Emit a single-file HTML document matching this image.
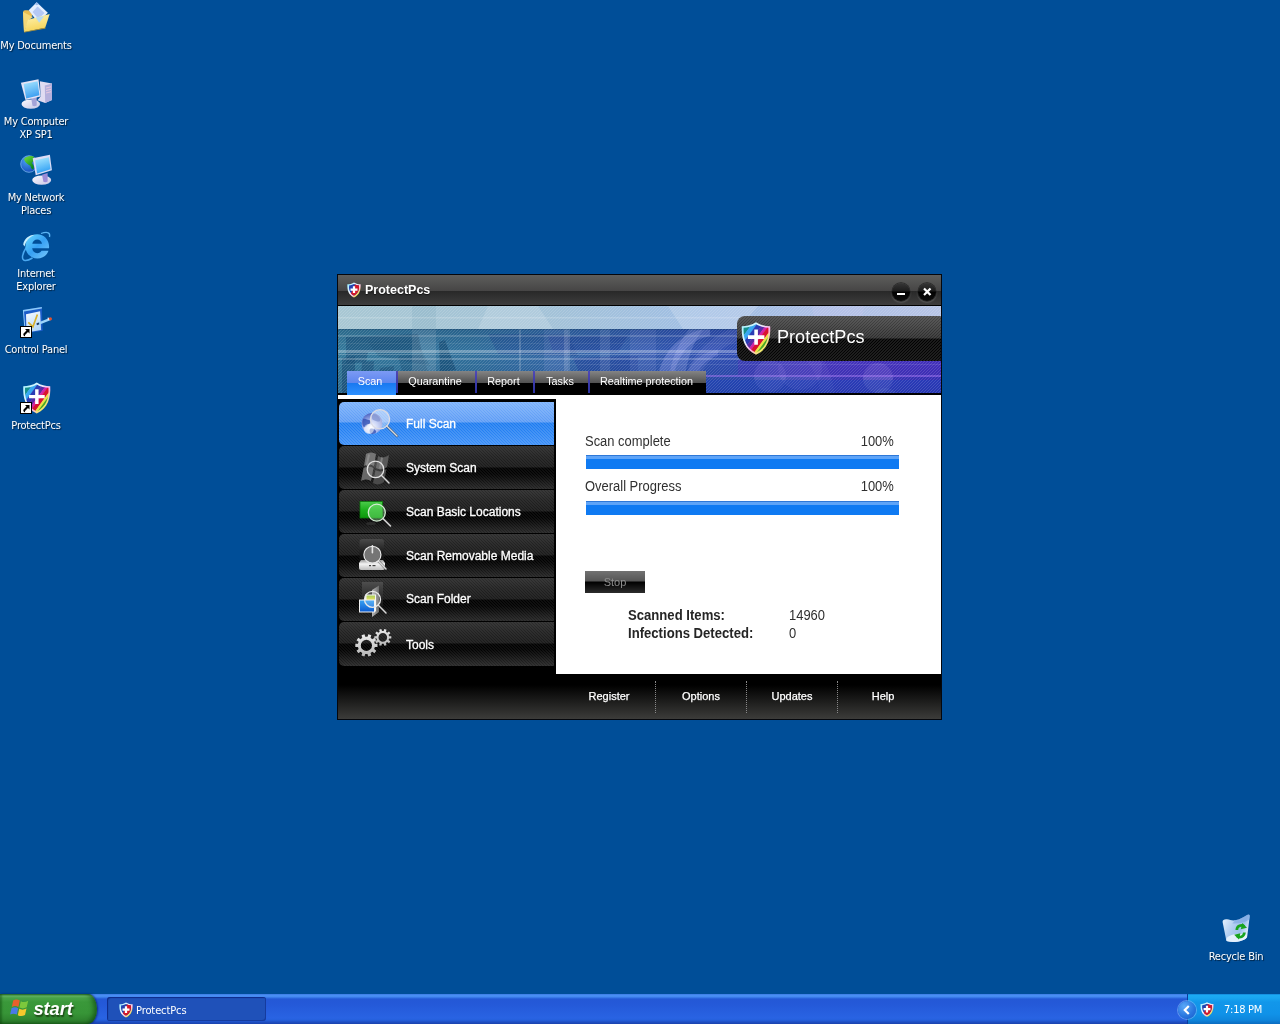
<!DOCTYPE html>
<html>
<head>
<meta charset="utf-8">
<title>ProtectPcs</title>
<style>
*{box-sizing:border-box;margin:0;padding:0}
html,body{width:1280px;height:1024px;overflow:hidden}
body{background:#004e98;font-family:"Liberation Sans",sans-serif;position:relative;will-change:transform}
.abs{position:absolute}
/* desktop icons */
.dicon{position:absolute;width:90px;text-align:center;color:#fff;font-family:"DejaVu Sans Condensed","DejaVu Sans","Liberation Sans",sans-serif;font-size:11px;line-height:13px;letter-spacing:-.22px}
.dicon svg{display:block;margin:0 auto}
.dicon .dl{margin-top:5px;text-shadow:1px 1px 1px rgba(0,0,0,.6);white-space:nowrap}
/* taskbar */
#taskbar{position:absolute;left:0;top:994px;width:1280px;height:30px;background:linear-gradient(#3572dc 0,#4a90f4 1px,#4489f0 3px,#2c69e0 4px,#2458d6 5.500px,#2459d8 10px,#2963e3 24px,#2560dc 26px,#1e4fc4 28px,#1a42ac 30px)}
#start{position:absolute;left:0;top:0;width:97px;height:30px;border-radius:0 9px 9px 0/0 15px 15px 0;background:linear-gradient(#2e7a2e 0,#66b866 2px,#48a448 4px,#3a983a 8px,#379537 19px,#2f842f 26px,#256c25 30px);box-shadow:inset -4px 0 5px -1px rgba(0,50,0,.55),inset 2px 0 2px rgba(0,50,0,.35),1px 0 2px rgba(0,10,80,.6)}
#start span{position:absolute;left:33.500px;top:4px;color:#fff;font:italic bold 18.5px/22px "Liberation Sans",sans-serif;text-shadow:1px 1.500px 1.500px rgba(20,50,10,.8);letter-spacing:-.2px}
#task{position:absolute;left:107px;top:3px;width:159px;height:24px;border-radius:3px;background:#1f51b9;box-shadow:inset 1px 1px 1px rgba(8,30,120,.75),inset -1px -1px 0 rgba(15,45,140,.6);color:#fff;font:11px/24px "DejaVu Sans Condensed","DejaVu Sans",sans-serif;letter-spacing:-.1px}
#task span{position:absolute;left:29px;top:2px}
#tray{position:absolute;left:1187px;top:0;width:93px;height:30px;background:linear-gradient(#0f78d0 0,#1cacf4 1px,#19a6f2 4px,#1297ea 8px,#1092e8 20px,#0e86dc 26px,#0b6cc0 30px);border-left:1px solid #0c3c9c;color:#fff;font:11px/30px "DejaVu Sans Condensed","DejaVu Sans",sans-serif;letter-spacing:-.25px}
#chev{position:absolute;left:1178px;top:7px;width:18px;height:18px;border-radius:9px;background:radial-gradient(circle at 35% 30%,#5aa8f8 0,#2a78e0 55%,#1858c8 100%);box-shadow:0 0 0 1px rgba(140,190,250,.55)}
/* window */
#win{position:absolute;left:337px;top:274px;width:605px;height:446px;background:#000;border:1px solid #05070c;overflow:hidden}
#title{position:absolute;left:0;top:0;width:603px;height:30px;background:linear-gradient(#5e5e5c 0,#464545 16px,#282828 16px,#3e3d3d 30px)}
#title .t{position:absolute;left:27px;top:7px;color:#fff;font:bold 12.5px/16px "Liberation Sans",sans-serif;text-shadow:0 1px 1px rgba(0,0,0,.6)}
.cb{position:absolute;top:8px;width:18px;height:18px;border-radius:9px;background:linear-gradient(#363636 0,#1c1c1c 8px,#020202 9px,#0e0e0e 18px);box-shadow:0 0 0 .7px rgba(10,10,10,.6),0 1.500px 1.500px .6px rgba(120,120,120,.45)}
#banner{position:absolute;left:0;top:31px;width:603px;height:87px;overflow:hidden}
#logo{position:absolute;left:399px;top:10px;width:210px;height:45px;border-radius:8px;background:repeating-linear-gradient(135deg,rgba(255,255,255,.10) 0,rgba(255,255,255,.10) 1px,rgba(255,255,255,0) 1px,rgba(255,255,255,0) 2.12px),linear-gradient(#484848 0,#2c2c2c 22px,#000 23px,#060606 45px)}
#logo span{position:absolute;left:40px;top:10px;color:#fff;font:18.1px/22px "Liberation Sans",sans-serif}
#tabs{position:absolute;left:0;top:96px;width:603px;height:24px}
.tab{position:absolute;top:0;height:24px;color:#fff;font:10.8px/20px "Liberation Sans",sans-serif;text-align:center;padding-right:3px;background:linear-gradient(#848484 0,#505050 12px,#000 12px,#000 24px)}
.tab.sel{background:linear-gradient(#7c9af4 0,#5c86ee 12px,#1878f0 12px,#2c90ff 24px)}
.tsep{position:absolute;top:0;width:2px;height:22px;background:linear-gradient(#5048b4,#2a30a0)}
#side{position:absolute;left:0;top:124px;width:218px;height:275px;background:#000}
.mi{position:absolute;left:1px;width:215px;height:43px;border-radius:5px 0 0 5px;color:#fff;font:12px/43px "Liberation Sans",sans-serif;background:repeating-linear-gradient(45deg,rgba(255,255,255,.055) 0,rgba(255,255,255,.055) 1px,rgba(255,255,255,0) 1px,rgba(255,255,255,0) 2.12px),linear-gradient(#2e2e2e 0,#222 10px,#1a1a1a 21px,#000 22px,#020202 28px,#262626 43px)}
.mi.sel{background:repeating-linear-gradient(45deg,rgba(255,255,255,.13) 0,rgba(255,255,255,.13) 1px,rgba(255,255,255,0) 1px,rgba(255,255,255,0) 2.12px),linear-gradient(#78b0fa 0,#5a9af5 20px,#1a7af0 21px,#3a8ef8 43px)}
.mi span{position:absolute;left:67px;top:0;-webkit-text-stroke:.3px #fff}
.mi svg{position:absolute}
#content{position:absolute;left:0;top:120px;width:603px;height:279px;background:#fff}
#content .lbl{position:absolute;margin-left:219px;color:#303030;font:14px/16px "Liberation Sans",sans-serif;white-space:nowrap;transform:scaleX(.925);transform-origin:0 0}
#content .lbl.r{transform-origin:100% 0}
#content .lbl.b{font-weight:bold;color:#262626;transform:scaleX(.937)}
#bottom{position:absolute;left:0;top:399px;width:603px;height:45px;background:linear-gradient(#000 0,#000 11px,#3c3c3a 45px)}
.bl{position:absolute;top:0;height:45px;line-height:45px;color:#fff;font-size:11px;text-align:center;-webkit-text-stroke:.25px #fff}
.sep{position:absolute;top:7px;height:32px;width:0;border-left:1px dotted #888}
.pb{position:absolute;left:248px;width:313px;height:14px;background:linear-gradient(#2e78d8 0,#2e78d8 1px,#5ea4f8 1px,#5ea4f8 4px,#0f7af2 4px)}
#stop{position:absolute;left:247px;top:176px;width:60px;height:22px;background:linear-gradient(#727272 0,#565656 10px,#000 11px,#2c2c2c 22px);color:#8e8e8e;font:11px/22px "Liberation Sans",sans-serif;text-align:center}
</style>
</head>
<body>

<!-- DESKTOP ICONS -->
<div class="dicon" style="left:-9px;top:2px"><svg width="32" height="32" viewBox="0 0 32 32"><defs><linearGradient id="dg1" x1="0" y1="0" x2=".3" y2="1"><stop offset="0" stop-color="#fff6b8"/><stop offset="1" stop-color="#f6d458"/></linearGradient></defs><path d="M3 10.500Q3 8.300 5 8.300H8.500L13 12.500L8 18L4 30Z" fill="#e8bc50"/><path d="M3 10L4 30L9 18L13 15Z" fill="#f4d878"/><path d="M16.700 0.200L27.800 10.700L18 20.500L8.700 8.300Z" fill="#e4eeff"/><path d="M17.500 4.500L24.500 11L18.500 17L12.500 10Z" fill="#b4c8f4"/><path d="M16.700 0.200L19 2.400L16.500 3.200L14.800 2Z" fill="#9abcf0"/><path d="M8 17.700L29.700 12L25.200 25.800L4 30Z" fill="url(#dg1)"/><path d="M15.700 15.600L24.100 14.200L19.200 20.800Z" fill="#b4daf6"/><path d="M4 30L25.200 25.800L25.600 26.500L4.300 30.600Z" fill="#c09828"/></svg><div class="dl">My Documents</div></div>
<div class="dicon" style="left:-9px;top:78px"><svg width="32" height="32" viewBox="0 0 32 32"><defs><linearGradient id="cs2" x1=".2" y1="0" x2=".5" y2="1"><stop offset="0" stop-color="#a4e4ff"/><stop offset="1" stop-color="#389cf0"/></linearGradient><linearGradient id="cb2" x1="0" y1="0" x2="1" y2="1"><stop offset="0" stop-color="#fafaff"/><stop offset="1" stop-color="#c4c4e4"/></linearGradient></defs><path d="M19.900 3.300L32 5.400V21.900L25.200 25.100L17.400 22.300L20.600 18.400Z" fill="#e0dcf2"/><path d="M24.800 7.500L32 5.600V21.900L25.200 25.100Z" fill="#b4b0dc"/><path d="M26 10L31 8.800M26 12.500L31 11.300M26 15L31 13.800" stroke="#e8c8e0" stroke-width="1"/><ellipse cx="10.800" cy="26.100" rx="9.300" ry="4.700" fill="url(#cb2)"/><path d="M11.100 19.800L16.700 18.700V27.500Q14.500 28.800 12.500 27.800Z" fill="#a4a4d8"/><path d="M0.900 4.700L18.500 1.200L20.600 18.400L5.500 21.900Z" fill="#e4e4f6"/><path d="M3.600 5.900L17.600 3.300L19.400 17.200L6.200 20.500Z" fill="url(#cs2)"/></svg><div class="dl">My Computer<br>XP SP1</div></div>
<div class="dicon" style="left:-9px;top:154px"><svg width="32" height="32" viewBox="0 0 32 32"><defs><radialGradient id="ng3" cx=".35" cy=".3" r=".9"><stop offset="0" stop-color="#4aa0f0"/><stop offset="1" stop-color="#0a3cb0"/></radialGradient><linearGradient id="nl3" x1="0" y1="0" x2=".6" y2="1"><stop offset="0" stop-color="#7ae040"/><stop offset="1" stop-color="#0a8a1a"/></linearGradient><linearGradient id="ns3" x1=".2" y1="0" x2=".5" y2="1"><stop offset="0" stop-color="#a8e8ff"/><stop offset="1" stop-color="#30a0f4"/></linearGradient><linearGradient id="nb3" x1="0" y1="0" x2="1" y2="1"><stop offset="0" stop-color="#fafaff"/><stop offset="1" stop-color="#c8c4e4"/></linearGradient></defs><circle cx="9" cy="10" r="8.300" fill="url(#ng3)" stroke="#7ab4f0" stroke-width=".8"/><path d="M4 5C7 1.500 12 1.500 14 3C15 6 13 7 12 9C13 11 14.500 12 13.500 15C12 16 11 14 10.500 12C8 10 5 9 4 5Z" fill="url(#nl3)"/><ellipse cx="21.700" cy="26.100" rx="9.500" ry="4.700" fill="url(#nb3)"/><path d="M22 20.800L27.600 19.100V27.500Q25.500 28.800 23.400 27.800Z" fill="#9c8cd8"/><path d="M12.700 4.300L29.900 0.800L31.900 16.300L15.700 21.200Z" fill="#dcdcf6"/><path d="M15 6.300L28.900 3.300L30.600 15.200L17.100 19.400Z" fill="url(#ns3)"/></svg><div class="dl">My Network<br>Places</div></div>
<div class="dicon" style="left:-9px;top:230px"><svg width="32" height="32" viewBox="0 0 32 32"><defs><linearGradient id="ie4" x1="0" y1="0" x2="1" y2="1"><stop offset="0" stop-color="#6adcff"/><stop offset=".5" stop-color="#36a0f4"/><stop offset="1" stop-color="#7ac8fa"/></linearGradient></defs><path d="M29.500 7C30.500 3 28 1 21 3.500" fill="none" stroke="#5ab4f4" stroke-width="1.300"/><path d="M6.500 17C2 24 1 30 5 30.500C7 30.700 10 29.500 12.500 28" fill="none" stroke="#4aa8f0" stroke-width="1.500"/><path d="M17.200 4.200C10.500 4.200 5.500 9.700 5.500 16.400C5.500 23.300 10.700 28.500 17.300 28.500C22.500 28.500 26.800 25.600 28.500 20.800H21.500C20.700 22.300 19.200 23.200 17.300 23.200C14.500 23.200 12.500 21.200 12.200 18.300H29C29.100 17.600 29.100 17 29.100 16.400C29.100 9.700 24 4.200 17.200 4.200ZM12.300 13.700C12.800 11.300 14.700 9.500 17.200 9.500C19.700 9.500 21.600 11.300 22 13.700Z" fill="url(#ie4)"/><path d="M3.200 14.500C4 9 9 5 14.500 4.800C9.500 7 6 11 4.500 16.500Z" fill="#c8f0ff"/></svg><div class="dl">Internet<br>Explorer</div></div>
<div class="dicon" style="left:-9px;top:306px"><svg width="32" height="32" viewBox="0 0 32 32"><defs><linearGradient id="cp5" x1="0" y1="0" x2=".4" y2="1"><stop offset="0" stop-color="#fbfcff"/><stop offset="1" stop-color="#b4d8f8"/></linearGradient></defs><path d="M2.900 4L21.800 1L22.700 24.700L4.800 27.500Z" fill="#1c5cc8"/><path d="M2.900 4L21.800 1L21.900 2.600L4 5.600L5.800 27.300L4.800 27.500Z" fill="#8ccaf8"/><path d="M6 8.200L20.100 5.200L21.100 24L6.500 26.500Z" fill="url(#cp5)"/><path d="M8.300 16.300L12.900 20.800L17.400 8.500" fill="none" stroke="#d8b02c" stroke-width="1.700"/><path d="M18 17.800L30.500 12.800" stroke="#9cd4fa" stroke-width="2.400"/><path d="M16.700 18.300L19 17.400" stroke="#203860" stroke-width="1.800"/><circle cx="30.400" cy="12.800" r="1.600" fill="#e2502c"/><path d="M27.800 13L29 12.600" stroke="#f4e8f0" stroke-width="2.400"/><g><rect x="0.500" y="20.500" width="11" height="11" fill="#fff" stroke="#000" stroke-width="1"/><path d="M5 23H9.500V27.500L8 26L5.500 28.500C4.800 29.200 4.800 29.800 5.500 30.300L4.500 30.300C3 29.500 3 28 4 27L6.500 24.500Z" fill="#000"/></g></svg><div class="dl">Control Panel</div></div>
<div class="dicon" style="left:-9px;top:382px"><svg width="32" height="32" viewBox="0 0 32 32"><g transform="translate(2.500 0.200) scale(0.9500 0.9545)"><defs><clipPath id="shi1"><path d="M15 2.300C11.200 4.600 6.500 5.700 2.600 5.800C2.200 16 4.400 25.500 15 30.700C25.600 25.500 27.800 16 27.400 5.800C23.500 5.700 18.800 4.600 15 2.300Z"/></clipPath><clipPath id="sho1"><path d="M15 0.300C11 3 5.500 4.200 0.800 4.200C0.200 16 2.800 27 15 32.700C27.200 27 29.800 16 29.200 4.200C24.500 4.200 19 3 15 0.300Z"/></clipPath><linearGradient id="shr1" x1="0" y1="0" x2="1" y2="1"><stop offset="0" stop-color="#9af0ff"/><stop offset=".35" stop-color="#e8f8ff"/><stop offset=".6" stop-color="#ffb0e8"/><stop offset=".8" stop-color="#f0f060"/><stop offset="1" stop-color="#70e060"/></linearGradient></defs><path d="M15 0.300C11 3 5.500 4.200 0.800 4.200C0.200 16 2.800 27 15 32.700C27.200 27 29.800 16 29.200 4.200C24.500 4.200 19 3 15 0.300Z" fill="url(#shr1)"/><g clip-path="url(#shi1)"><g transform="rotate(-54 15 16)"><rect x="-20" y="-10" width="70" height="14.8" fill="#16908c"/><rect x="-20" y="4.5" width="70" height="4.3" fill="#38a8f2"/><rect x="-20" y="8.5" width="70" height="4.8" fill="#2a3cb4"/><rect x="-20" y="13" width="70" height="3.8" fill="#5a2aa4"/><rect x="-20" y="16.5" width="70" height="2.8" fill="#d422a4"/><rect x="-20" y="19" width="70" height="4.3" fill="#da1230"/><rect x="-20" y="23" width="70" height="2.6" fill="#ece444"/><rect x="-20" y="25.300" width="70" height="6" fill="#48aa22"/><rect x="-20" y="31" width="70" height="19.3" fill="#2a7ad8"/></g></g><path d="M13.300 7.400H16.900V13.300H23.400V16.900H16.900V22.800H13.300V16.900H6.900V13.300H13.300Z" fill="#fff"/></g><g><rect x="0.500" y="20.500" width="11" height="11" fill="#fff" stroke="#000" stroke-width="1"/><path d="M5 23H9.500V27.500L8 26L5.500 28.500C4.800 29.200 4.800 29.800 5.500 30.300L4.500 30.300C3 29.500 3 28 4 27L6.500 24.500Z" fill="#000"/></g></svg><div class="dl">ProtectPcs</div></div>
<div class="dicon" style="left:1191px;top:913px"><svg width="32" height="32" viewBox="0 0 32 32"><defs><linearGradient id="rb7" x1="0" y1="0" x2="1" y2=".5"><stop offset="0" stop-color="#eef7ff"/><stop offset=".45" stop-color="#b4d0f2"/><stop offset=".75" stop-color="#9cc0ec"/><stop offset="1" stop-color="#e0eefc"/></linearGradient></defs><path d="M2.600 9C2.400 6.800 4.500 6 7 6.300C10 6.700 12 7.800 15 7.300C20 6.500 24 4 27 2C28.800 0.900 30 1.500 29.700 3.500L27.200 23.500C27 25 25 26.500 22 27.500C17 29.300 11 29.500 7.500 28.300C6.500 28 6.200 27.200 6 26Z" fill="url(#rb7)"/><path d="M6.300 27.200C6 24 10 21.500 17 20.900C22 20.600 26.500 21.500 27.100 24C26.500 25.500 24.500 26.700 22 27.500C17 29.300 11 29.500 7.500 28.300C6.800 28.100 6.500 27.800 6.300 27.200Z" fill="#e8f3fd" opacity=".92"/><path d="M15 7.300C20 6.500 24 4 27 2C28.800 0.900 30 1.500 29.700 3.500L29.300 6.500C25 9.500 18 11 12.500 10.500Z" fill="#6e9ce0" opacity=".5"/><g fill="none" stroke="#18a41e" stroke-width="2.700"><path d="M16.800 17C17 12.800 21.500 11.300 24.300 13.600"/><path d="M24.400 19.500C24.200 23.700 19.700 25.200 16.900 22.900"/></g><path d="M22.300 10L27 14.800L20.800 16.200Z" fill="#18a41e"/><path d="M18.900 26.500L14.200 21.700L20.400 20.300Z" fill="#18a41e"/></svg><div class="dl">Recycle Bin</div></div>
<!-- /DESKTOP ICONS -->
<!-- WINDOW -->
<div id="win">
  <div id="title">
    <svg width="14" height="16" viewBox="0 0 30 33" style="position:absolute;left:8.500px;top:7px"><defs><clipPath id="shi2"><path d="M15 3.800C11.500 5.800 7.500 6.800 4.200 7C3.900 16 5.800 24 15 28.800C24.200 24 26.100 16 25.800 7C22.500 6.800 18.500 5.800 15 3.800Z"/></clipPath><linearGradient id="shr2" x1="0" y1="0" x2="1" y2="1"><stop offset="0" stop-color="#8ae8ff"/><stop offset=".4" stop-color="#f4fbff"/><stop offset=".62" stop-color="#ffc0d8"/><stop offset=".8" stop-color="#f0e850"/><stop offset="1" stop-color="#60d040"/></linearGradient></defs><path d="M15 0.300C11 3 5.500 4.200 0.800 4.200C0.200 16 2.800 27 15 32.700C27.200 27 29.800 16 29.200 4.200C24.500 4.200 19 3 15 0.300Z" fill="url(#shr2)"/><g clip-path="url(#shi2)"><rect width="30" height="33" fill="#2342b0"/><path d="M19 0L34 0L34 34L4 34Z" fill="#d41828"/><path d="M6 0L13 0L0 14L0 7Z" fill="#3a9ae8"/></g><path d="M12.600 8.500H17.400V13.200H22.500V18H17.400V23H12.600V18H7.500V13.200H12.600Z" fill="#fff"/></svg>
    <span class="t">ProtectPcs</span>
    <div class="cb" style="left:554px"><i style="position:absolute;left:5px;top:10px;width:8px;height:2px;background:#fff"></i></div>
    <div class="cb" style="left:580px"><svg width="18" height="18" style="position:absolute;left:0;top:0"><path d="M6 5.500L12.500 12M12.500 5.500L6 12" stroke="#fff" stroke-width="2.200" fill="none"/></svg></div>
  </div>
  <div id="banner"><svg width="603" height="88" viewBox="0 0 603 88" style="position:absolute;left:0;top:0">
<defs>
<linearGradient id="bgx" x1="0" x2="1" y1="0" y2="0">
<stop offset="0" stop-color="#347a9c"/><stop offset=".22" stop-color="#30709c"/><stop offset=".38" stop-color="#3366a8"/><stop offset=".55" stop-color="#3055b0"/><stop offset=".7" stop-color="#2e48b4"/><stop offset=".82" stop-color="#4038c0"/><stop offset="1" stop-color="#3c30c0"/>
</linearGradient>
<linearGradient id="bgt" x1="0" x2="1" y1="0" y2="0">
<stop offset="0" stop-color="#b2ced8"/><stop offset=".35" stop-color="#adcadc"/><stop offset=".6" stop-color="#aac8e8"/><stop offset=".8" stop-color="#b6cae8"/><stop offset="1" stop-color="#c2d2ea"/>
</linearGradient>
<linearGradient id="bgd" x1="0" x2="0" y1="0" y2="1">
<stop offset="0" stop-color="#001838" stop-opacity=".18"/><stop offset=".35" stop-color="#001838" stop-opacity=".0"/><stop offset="1" stop-color="#000c40" stop-opacity=".16"/>
</linearGradient>
<pattern id="hatch" width="3" height="3" patternUnits="userSpaceOnUse"><path d="M-1 1L1 -1M0 3L3 0M2 4L4 2" stroke="#fff" stroke-opacity=".17" stroke-width=".8"/></pattern>
</defs>
<rect width="603" height="88" fill="url(#bgx)"/>
<!-- dark shapes left -->
<g fill="#174f78">
<path d="M8 31L80 28L84 46L30 46L28 56L8 58Z" opacity=".55"/>
<path d="M30 36L78 34L92 60L40 50Z" opacity=".35"/>
<path d="M4 52L17 50L17 88L4 88Z" opacity=".6"/>
<path d="M24 56L36 55L34 88L22 88Z" opacity=".55"/>
<path d="M42 62L56 60L54 88L40 88Z" opacity=".5"/>
<path d="M101 36L107 34L118 64L102 66Z" opacity=".7"/>
<path d="M60 50L84 48L98 88L70 88Z" opacity=".4"/>
<path d="M150 28L230 28L240 50L160 48Z" fill="#1c4590" opacity=".35"/>
<path d="M210 30L290 30L280 46L215 46Z" fill="#1c3f96" opacity=".45"/>
<path d="M235 52L300 50L300 86L250 86Z" fill="#1c3a98" opacity=".4"/>
</g>
<!-- light vertical bars -->
<rect x="74" y="0" width="24" height="88" fill="#fff" opacity=".12"/>
<rect x="181" y="0" width="2" height="88" fill="#fff" opacity=".18"/>
<rect x="226" y="0" width="6" height="88" fill="#fff" opacity=".16"/>
<rect x="206" y="22" width="24" height="66" fill="#c8c8ff" opacity=".10"/>
<!-- arcs / circles -->
<rect x="262" y="22" width="10" height="66" fill="#fff" opacity=".10"/>
<rect x="292" y="22" width="26" height="66" fill="#c0c8ff" opacity=".10"/>
<path d="M330 88C330 60 338 40 352 22L366 22C352 40 346 62 346 88Z" fill="#c0c8ff" opacity=".22"/>
<path d="M318 88C318 50 340 26 372 22L372 30C348 34 334 56 334 88Z" fill="#b0b8ff" opacity=".28"/>
<path d="M345 88C345 62 360 46 380 44L380 50C366 53 356 66 356 88Z" fill="#b0b8ff" opacity=".18"/>
<circle cx="420" cy="95" r="70" fill="none" stroke="#c0c0ff" stroke-opacity=".10" stroke-width="14"/>
<circle cx="432" cy="70" r="16" fill="#b8a8ff" opacity=".22"/>
<circle cx="462" cy="62" r="22" fill="#b8a8ff" opacity=".16"/>
<circle cx="540" cy="72" r="15" fill="#c8b8ff" opacity=".24"/>
<circle cx="547" cy="98" r="16" fill="#c8c8ff" opacity=".2"/>
<!-- bottom right bands -->
<rect x="250" y="74" width="353" height="14" fill="#2048c8" opacity=".55"/>
<rect x="400" y="54" width="203" height="15" fill="#5030c0" opacity=".4"/>
<rect x="0" y="22" width="603" height="66" fill="url(#bgd)"/>
<!-- top light band -->
<rect x="0" y="0" width="603" height="23" fill="url(#bgt)"/>
<rect x="0" y="0" width="603" height="23" fill="url(#bgx)" opacity=".08"/>
<rect x="74" y="0" width="24" height="23" fill="#88b0c4" opacity=".35"/>
<path d="M150 0L200 0L215 23L140 23Z" fill="#fff" opacity=".15"/>
<path d="M330 0L420 0L400 23L345 23Z" fill="#fff" opacity=".18"/>
<circle cx="500" cy="0" r="26" fill="#c8c8f0" opacity=".25"/>
<!-- horizontal light lines -->
<g fill="#fff">
<rect x="0" y="11" width="603" height="1.500" opacity=".18"/>
<rect x="0" y="23" width="603" height="1" fill="#103c60" opacity=".35"/>
<rect x="0" y="29" width="603" height="2" opacity=".16"/>
<rect x="0" y="37" width="603" height="1" opacity=".08"/>
<rect x="0" y="44" width="603" height="3" opacity=".30"/>
<rect x="0" y="48" width="603" height="1" opacity=".22"/>
<rect x="0" y="52" width="603" height="2" opacity=".22"/>
<rect x="0" y="58" width="603" height="1" opacity=".10"/>
<rect x="250" y="69" width="353" height="2" fill="#a070f0" opacity=".5"/>
</g>
<rect width="603" height="88" fill="url(#hatch)"/>
</svg>
    <div id="logo"><svg width="30" height="33" viewBox="0 0 30 33" style="position:absolute;left:4px;top:6px"><defs><clipPath id="shi3"><path d="M15 2.300C11.200 4.600 6.500 5.700 2.600 5.800C2.200 16 4.400 25.500 15 30.700C25.600 25.500 27.800 16 27.400 5.800C23.500 5.700 18.800 4.600 15 2.300Z"/></clipPath><clipPath id="sho3"><path d="M15 0.300C11 3 5.500 4.200 0.800 4.200C0.200 16 2.800 27 15 32.700C27.200 27 29.800 16 29.200 4.200C24.500 4.200 19 3 15 0.300Z"/></clipPath><linearGradient id="shr3" x1="0" y1="0" x2="1" y2="1"><stop offset="0" stop-color="#9af0ff"/><stop offset=".35" stop-color="#e8f8ff"/><stop offset=".6" stop-color="#ffb0e8"/><stop offset=".8" stop-color="#f0f060"/><stop offset="1" stop-color="#70e060"/></linearGradient></defs><path d="M15 0.300C11 3 5.500 4.200 0.800 4.200C0.200 16 2.800 27 15 32.700C27.200 27 29.800 16 29.200 4.200C24.500 4.200 19 3 15 0.300Z" fill="url(#shr3)"/><g clip-path="url(#shi3)"><g transform="rotate(-54 15 16)"><rect x="-20" y="-10" width="70" height="14.8" fill="#16908c"/><rect x="-20" y="4.5" width="70" height="4.3" fill="#38a8f2"/><rect x="-20" y="8.5" width="70" height="4.8" fill="#2a3cb4"/><rect x="-20" y="13" width="70" height="3.8" fill="#5a2aa4"/><rect x="-20" y="16.5" width="70" height="2.8" fill="#d422a4"/><rect x="-20" y="19" width="70" height="4.3" fill="#da1230"/><rect x="-20" y="23" width="70" height="2.6" fill="#ece444"/><rect x="-20" y="25.300" width="70" height="6" fill="#48aa22"/><rect x="-20" y="31" width="70" height="19.3" fill="#2a7ad8"/></g></g><path d="M13.300 7.400H16.900V13.300H23.400V16.900H16.900V22.800H13.300V16.900H6.900V13.300H13.300Z" fill="#fff"/></svg><span>ProtectPcs</span></div>
  </div>
  <div id="tabs">
    <div class="tab sel" style="left:9px;width:49px">Scan</div>
    <div class="tab" style="left:60px;width:77px">Quarantine</div>
    <div class="tab" style="left:139px;width:56px">Report</div>
    <div class="tab" style="left:197px;width:53px">Tasks</div>
    <div class="tab" style="left:252px;width:116px">Realtime protection</div>
    <i class="tsep" style="left:58px"></i><i class="tsep" style="left:137px"></i><i class="tsep" style="left:195px"></i><i class="tsep" style="left:250px"></i>
  </div>
  <div id="content">
    <span class="lbl" style="left:28px;top:38px">Scan complete</span><span class="lbl r" style="right:47px;top:38px">100%</span>
    <div class="pb" style="top:60px"></div>
    <span class="lbl" style="left:28px;top:83px">Overall Progress</span><span class="lbl r" style="right:47px;top:83px">100%</span>
    <div class="pb" style="top:106px"></div>
    <div id="stop">Stop</div>
    <span class="lbl b" style="left:71px;top:212px">Scanned Items:</span><span class="lbl" style="left:232px;top:212px">14960</span>
    <span class="lbl b" style="left:71px;top:230px">Infections Detected:</span><span class="lbl" style="left:232px;top:230px">0</span>
  </div>
  <div id="side">
    <div class="mi sel" style="top:3px"><svg width="80" height="44" viewBox="0 0 80 44" style="left:0;top:0"><defs><radialGradient id="gl1" cx=".45" cy=".7" r=".85"><stop offset="0" stop-color="#ffffff"/><stop offset=".4" stop-color="#a8b8f0"/><stop offset="1" stop-color="#2038a8"/></radialGradient></defs><circle cx="33" cy="21.5" r="10.5" fill="url(#gl1)"/><path d="M24 17c3-1 4 1 6 1s2 3 0 4-3 4-5 3-2-6-1-8zM34 12c3 0 6 2 7 5s-2 3-4 2-4-1-4-3 0-4 1-4zM31 27c2-1 5 0 6 2s-2 3-4 3-3-3-2-5z" fill="#2a4ab0" opacity=".75"/><circle cx="30" cy="27" r="5" fill="#fff" opacity=".55"/><line x1="47.8" y1="24.0" x2="58" y2="34" stroke="#3a3a3a" stroke-width="2.6" stroke-linecap="round" opacity=".55"/><line x1="47.8" y1="24.0" x2="58" y2="34" stroke="#d8d8d8" stroke-width="1.4" stroke-linecap="round"/><circle cx="41" cy="17.3" r="9.6" fill="rgba(255,255,255,.42)" stroke="#dcdce4" stroke-width="1.3"/></svg><span style="top:1px">Full Scan</span></div>
    <div class="mi" style="top:47px"><svg width="80" height="44" viewBox="0 0 80 44" style="left:0;top:0"><path d="M27 8c4-2 7-2 10 0l-2 12c-3-2-6-2-10 0z" fill="#747474"/><path d="M39 10c3 2 7 2 11-1l-2 12c-4 3-8 3-11 1z" fill="#5a5a5a"/><path d="M24.500 22c4-2 7-2 10 0l-2.500 13c-3-2-6-2-10 0z" fill="#686868"/><path d="M36.500 24c3 2 7 2 11-1l-2.500 13c-4 3-8 3-11 1z" fill="#4a4a4a"/><path d="M30 8.500l-2.500 12M43 11.500l-2 11" stroke="#a8a8a8" stroke-width="2" opacity=".5"/><line x1="42.3" y1="29.3" x2="50" y2="37" stroke="#3a3a3a" stroke-width="2.6" stroke-linecap="round" opacity=".55"/><line x1="42.3" y1="29.3" x2="50" y2="37" stroke="#d8d8d8" stroke-width="1.4" stroke-linecap="round"/><circle cx="36.5" cy="23.4" r="8.3" fill="rgba(150,150,150,.35)" stroke="#e0e0e0" stroke-width="1.3"/></svg><span style="top:1px">System Scan</span></div>
    <div class="mi" style="top:91px"><svg width="80" height="44" viewBox="0 0 80 44" style="left:0;top:0"><defs><linearGradient id="gr3" x1="0" x2="0" y1="0" y2="1"><stop offset="0" stop-color="#4ccc4c"/><stop offset=".5" stop-color="#1eb01e"/><stop offset="1" stop-color="#0c980c"/></linearGradient></defs><rect x="21" y="11.500" width="22.500" height="16.500" fill="url(#gr3)"/><rect x="21" y="11.500" width="22.500" height="16.500" fill="none" stroke="#0a7a0a" stroke-width=".8"/><ellipse cx="32" cy="33.500" rx="5" ry="1.600" fill="#2c2c2c"/><line x1="43.9" y1="28.5" x2="51.5" y2="36" stroke="#3a3a3a" stroke-width="2.6" stroke-linecap="round" opacity=".55"/><line x1="43.9" y1="28.5" x2="51.5" y2="36" stroke="#d8d8d8" stroke-width="1.4" stroke-linecap="round"/><circle cx="37.8" cy="22.6" r="8.5" fill="rgba(150,240,150,.38)" stroke="#d4ecd4" stroke-width="1.3"/></svg><span style="top:1px">Scan Basic Locations</span></div>
    <div class="mi" style="top:135px"><svg width="80" height="44" viewBox="0 0 80 44" style="left:0;top:0"><defs><linearGradient id="bx4" x1="0" x2="0" y1="0" y2="1"><stop offset="0" stop-color="#4a4a4a"/><stop offset=".5" stop-color="#202020"/><stop offset="1" stop-color="#0a0a0a"/></linearGradient><linearGradient id="bs4" x1="0" x2="0" y1="0" y2="1"><stop offset="0" stop-color="#9a9a9a"/><stop offset=".4" stop-color="#f4f4f4"/><stop offset="1" stop-color="#bcbcbc"/></linearGradient></defs><rect x="20.500" y="5" width="24.500" height="24" rx="3" fill="url(#bx4)"/><path d="M22 26h22l2 3v5a2 2 0 0 1-2 2H22a2 2 0 0 1-2-2v-5z" fill="url(#bs4)"/><rect x="30" y="31" width="2" height="1.200" fill="#444"/><rect x="33.500" y="31" width="3" height="1.200" fill="#444"/><circle cx="33.400" cy="20.800" r="7.800" fill="#6a6a6a"/><rect x="32.600" y="11" width="1.600" height="8.500" rx=".8" fill="#e8e8e8"/><line x1="39.3" y1="26.9" x2="47" y2="35" stroke="#3a3a3a" stroke-width="2.6" stroke-linecap="round" opacity=".55"/><line x1="39.3" y1="26.9" x2="47" y2="35" stroke="#d8d8d8" stroke-width="1.4" stroke-linecap="round"/><circle cx="33.4" cy="20.8" r="8.5" fill="rgba(200,200,200,.12)" stroke="#e6e6e6" stroke-width="1.3"/></svg><span style="top:1px">Scan Removable Media</span></div>
    <div class="mi" style="top:179px"><svg width="80" height="44" viewBox="0 0 80 44" style="left:0;top:0"><defs><linearGradient id="fd5" x1="0" x2="0" y1="0" y2="1"><stop offset="0" stop-color="#4e4e4e"/><stop offset="1" stop-color="#161616"/></linearGradient><linearGradient id="dr5" x1="0" x2="1" y1="0" y2="0"><stop offset="0" stop-color="#b8b8b8"/><stop offset="1" stop-color="#6a6a6a"/></linearGradient><linearGradient id="yl5" x1="0" x2="0" y1="0" y2="1"><stop offset="0" stop-color="#9ac83c"/><stop offset="1" stop-color="#f0dc50"/></linearGradient><linearGradient id="bl5" x1="0" x2="0" y1="0" y2="1"><stop offset="0" stop-color="#3aa4f4"/><stop offset="1" stop-color="#0a5ad0"/></linearGradient></defs><rect x="23" y="4" width="21" height="24" fill="url(#fd5)"/><path d="M33 12l7-4.500v26.500l-7 5z" fill="url(#dr5)"/><rect x="26" y="16.500" width="11" height="17" fill="#f4f4f0"/><rect x="27.500" y="17.500" width="8.500" height="5" fill="url(#yl5)"/><rect x="20.500" y="22" width="15" height="12" fill="url(#bl5)" stroke="#f0f0f0" stroke-width="1"/><line x1="39.1" y1="27.1" x2="47" y2="35" stroke="#3a3a3a" stroke-width="2.6" stroke-linecap="round" opacity=".55"/><line x1="39.1" y1="27.1" x2="47" y2="35" stroke="#d8d8d8" stroke-width="1.4" stroke-linecap="round"/><circle cx="33.5" cy="21.4" r="8" fill="rgba(255,255,255,.14)" stroke="#e8e8e8" stroke-width="1.3"/></svg><span style="top:0px">Scan Folder</span></div>
    <div class="mi" style="top:223px;height:44px"><svg width="80" height="44" viewBox="0 0 80 44" style="left:0;top:0"><defs><linearGradient id="gg6" x1="0" x2="0" y1="0" y2="1"><stop offset="0" stop-color="#ececec"/><stop offset="1" stop-color="#b4b4b4"/></linearGradient></defs><path d="M38.49 21.86L38.49 24.94L35.85 25.01L35.18 27.06L37.28 28.67L35.47 31.17L33.29 29.67L31.54 30.94L32.30 33.47L29.36 34.43L28.48 31.93L26.32 31.93L25.44 34.43L22.50 33.47L23.26 30.94L21.51 29.67L19.33 31.17L17.52 28.67L19.62 27.06L18.95 25.01L16.31 24.94L16.31 21.86L18.95 21.79L19.62 19.74L17.52 18.13L19.33 15.63L21.51 17.13L23.26 15.86L22.50 13.33L25.44 12.37L26.32 14.87L28.48 14.87L29.36 12.37L32.30 13.33L31.54 15.86L33.29 17.13L35.47 15.63L37.28 18.13L35.18 19.74L35.85 21.79ZM33.00 23.40A5.6 5.6 0 1 0 21.80 23.40A5.6 5.6 0 1 0 33.00 23.40Z" fill="url(#gg6)" fill-rule="evenodd"/><path d="M52.32 14.22L52.32 16.58L50.09 16.60L49.59 18.12L51.39 19.45L49.99 21.37L48.18 20.07L46.88 21.01L47.56 23.13L45.31 23.87L44.60 21.75L43.00 21.75L42.29 23.87L40.04 23.13L40.72 21.01L39.42 20.07L37.61 21.37L36.21 19.45L38.01 18.12L37.51 16.60L35.28 16.58L35.28 14.22L37.51 14.20L38.01 12.68L36.21 11.35L37.61 9.43L39.42 10.73L40.72 9.79L40.04 7.67L42.29 6.93L43.00 9.05L44.60 9.05L45.31 6.93L47.56 7.67L46.88 9.79L48.18 10.73L49.99 9.43L51.39 11.35L49.59 12.68L50.09 14.20ZM48.10 15.40A4.3 4.3 0 1 0 39.50 15.40A4.3 4.3 0 1 0 48.10 15.40Z" fill="url(#gg6)" fill-rule="evenodd"/></svg><span style="top:2px">Tools</span></div>
  </div>
  <div id="bottom">
    <span class="bl" style="left:219px;width:104px">Register</span>
    <span class="bl" style="left:319px;width:88px">Options</span>
    <span class="bl" style="left:410px;width:88px">Updates</span>
    <span class="bl" style="left:501px;width:88px">Help</span>
    <i class="sep" style="left:317px"></i><i class="sep" style="left:408px"></i><i class="sep" style="left:499px"></i>
  </div>
</div>

<!-- TASKBAR -->
<div id="taskbar">
  <div id="start">
    <svg width="20" height="18" viewBox="0 0 20 18" style="position:absolute;left:10px;top:5px">
      <path d="M3.200 1.500C5.500 0.200 7.500 0.300 9.800 1.600L8.400 8C6.200 6.800 4.100 6.800 1.800 8Z" fill="#e8602c"/>
      <path d="M10.800 2.200C13 3.500 15.600 3.300 18.200 1.800L16.700 8.300C14.200 9.700 11.700 9.800 9.400 8.600Z" fill="#7cc83c"/>
      <path d="M1.500 9.200C3.800 8 6 8 8.200 9.200L6.800 15.600C4.600 14.400 2.400 14.400 0.100 15.600Z" fill="#4a7ae8"/>
      <path d="M9.200 9.800C11.500 11 14 10.900 16.500 9.500L15 16C12.500 17.400 10 17.400 7.800 16.200Z" fill="#f4c82c"/>
    </svg>
    <span>start</span></div>
  <div id="task"><svg width="14" height="16" viewBox="0 0 30 33" style="position:absolute;left:11.500px;top:5px"><defs><clipPath id="shi4"><path d="M15 3.800C11.500 5.800 7.500 6.800 4.200 7C3.900 16 5.800 24 15 28.800C24.200 24 26.100 16 25.800 7C22.500 6.800 18.500 5.800 15 3.800Z"/></clipPath><linearGradient id="shr4" x1="0" y1="0" x2="1" y2="1"><stop offset="0" stop-color="#8ae8ff"/><stop offset=".4" stop-color="#f4fbff"/><stop offset=".62" stop-color="#ffc0d8"/><stop offset=".8" stop-color="#f0e850"/><stop offset="1" stop-color="#60d040"/></linearGradient></defs><path d="M15 0.300C11 3 5.500 4.200 0.800 4.200C0.200 16 2.800 27 15 32.700C27.200 27 29.800 16 29.200 4.200C24.500 4.200 19 3 15 0.300Z" fill="url(#shr4)"/><g clip-path="url(#shi4)"><rect width="30" height="33" fill="#2342b0"/><path d="M19 0L34 0L34 34L4 34Z" fill="#d41828"/><path d="M6 0L13 0L0 14L0 7Z" fill="#3a9ae8"/></g><path d="M12.600 8.500H17.400V13.200H22.500V18H17.400V23H12.600V18H7.500V13.200H12.600Z" fill="#fff"/></svg><span>ProtectPcs</span></div>
  <div id="tray"><svg width="14" height="15" viewBox="0 0 30 33" style="position:absolute;left:12px;top:8px"><defs><clipPath id="shi5"><path d="M15 3.800C11.500 5.800 7.500 6.800 4.200 7C3.900 16 5.800 24 15 28.800C24.200 24 26.100 16 25.800 7C22.500 6.800 18.500 5.800 15 3.800Z"/></clipPath><linearGradient id="shr5" x1="0" y1="0" x2="1" y2="1"><stop offset="0" stop-color="#8ae8ff"/><stop offset=".4" stop-color="#f4fbff"/><stop offset=".62" stop-color="#ffc0d8"/><stop offset=".8" stop-color="#f0e850"/><stop offset="1" stop-color="#60d040"/></linearGradient></defs><path d="M15 0.300C11 3 5.500 4.200 0.800 4.200C0.200 16 2.800 27 15 32.700C27.200 27 29.800 16 29.200 4.200C24.500 4.200 19 3 15 0.300Z" fill="url(#shr5)"/><g clip-path="url(#shi5)"><rect width="30" height="33" fill="#2342b0"/><path d="M19 0L34 0L34 34L4 34Z" fill="#d41828"/><path d="M6 0L13 0L0 14L0 7Z" fill="#3a9ae8"/></g><path d="M12.600 8.500H17.400V13.200H22.500V18H17.400V23H12.600V18H7.500V13.200H12.600Z" fill="#fff"/></svg><span class="abs" style="left:36px;top:1px">7:18 PM</span></div>
  <div id="chev"><svg width="18" height="18" viewBox="0 0 18 18"><path d="M10.800 5L6.800 9L10.800 13" fill="none" stroke="#fff" stroke-width="2.200"/></svg></div>
</div>

</body>
</html>
